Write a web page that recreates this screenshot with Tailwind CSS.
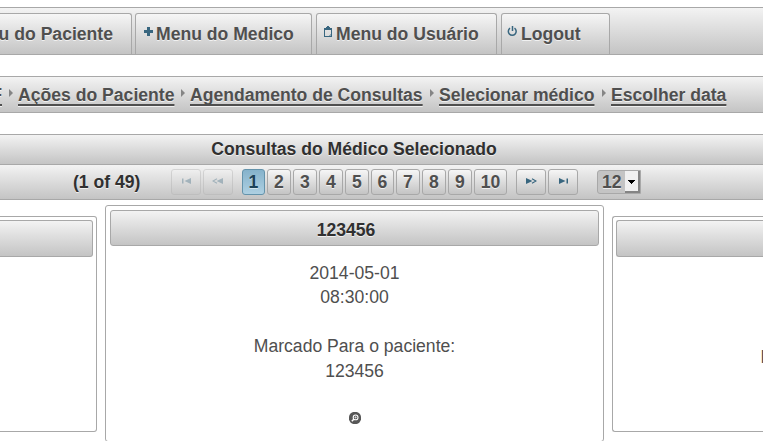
<!DOCTYPE html>
<html lang="pt-BR">
<head>
<meta charset="utf-8">
<title>Consultas</title>
<script src="https://cdn.jsdelivr.net/npm/@tailwindcss/browser@4"></script>
</head>
<body class="w-[763px] bg-white text-[#4f4f4f] text-[17.6px] leading-[24px] [font-family:'Liberation_Sans',Arial,sans-serif]">
<div class="h-[441px] overflow-hidden flex flex-col">

<nav class="mt-[7px] h-[48px] shrink-0 border-y border-[#a8a8a8] bg-linear-to-b from-[#f3f3f3] to-[#c4c4c4] pt-[5px] flex font-bold [text-shadow:0_1px_0_rgba(255,255,255,0.7)] overflow-hidden whitespace-nowrap">
  <div class="w-[132px] shrink-0 h-[41px] border-t border-r border-[#a8a8a8] rounded-tr-[3px] bg-linear-to-b from-[#f6f6f6] to-[#c4c4c4] flex justify-end pr-[18px] pt-[8px] overflow-hidden">Menu do Paciente</div>
  <div class="ml-[3px] w-[177px] shrink-0 h-[41px] border border-b-0 border-[#a8a8a8] rounded-t-[3px] bg-linear-to-b from-[#f6f6f6] to-[#c4c4c4] flex pl-[8px] pt-[8px]">
    <svg class="mt-[5px] mr-[3px] w-[9px] h-[9px] shrink-0" viewBox="0 0 9 9" shape-rendering="crispEdges"><path d="M3 0h3v3h3v3H6v3H3V6H0V3h3z" fill="#38667f"/></svg>
    <span>Menu do Medico</span>
  </div>
  <div class="ml-[4px] w-[181px] shrink-0 h-[41px] border border-b-0 border-[#a8a8a8] rounded-t-[3px] bg-linear-to-b from-[#f6f6f6] to-[#c4c4c4] flex pl-[7px] pt-[8px]">
    <svg class="mt-[4px] mr-[4px] w-[8px] h-[11px] shrink-0" viewBox="0 0 8 11" shape-rendering="crispEdges"><path d="M3 0h2v1h1v1h2v9H0V2h2V1h1zM1 4v6h6V4z" fill="#38667f" fill-rule="evenodd"/><path d="M6 9h1v1H6zM5 9h1v1H5zM6 8h1v1H6z" fill="#8fa8b5"/></svg>
    <span>Menu do Usuário</span>
  </div>
  <div class="ml-[4px] w-[109px] shrink-0 h-[41px] border border-b-0 border-[#a8a8a8] rounded-t-[3px] bg-linear-to-b from-[#f6f6f6] to-[#c4c4c4] flex pl-[5px] pt-[8px]">
    <svg class="mt-[4px] mr-[4px] w-[10px] h-[11px] shrink-0" viewBox="0 0 10 11"><path d="M3 2.200A3.900 3.900 0 1 0 7.500 2.200M5.500 0v5" fill="none" stroke="#38667f" stroke-width="1.500"/></svg>
    <span>Logout</span>
  </div>
</nav>

<div class="mt-[21px] h-[37px] shrink-0 border-y border-[#a8a8a8] bg-linear-to-b from-[#f3f3f3] to-[#c4c4c4] flex font-bold whitespace-nowrap overflow-hidden [text-shadow:0_1px_0_rgba(255,255,255,0.7)]">
  <a class="w-[2px] h-[30px] shrink-0 flex justify-end pt-[6px] overflow-hidden underline underline-offset-[3px] decoration-2">CPF</a>
  <svg class="mt-[12px] ml-[7px] mr-[5px] w-[4px] h-[8px] shrink-0" viewBox="0 0 4 8"><path d="M0 0l4 4-4 4z" fill="#858585"/></svg>
  <a class="w-[156px] pt-[6px] shrink-0 underline underline-offset-[3px] decoration-2 [text-decoration-skip-ink:none]">Ações do Paciente</a>
  <svg class="mt-[12px] ml-[7px] mr-[5px] w-[4px] h-[8px] shrink-0" viewBox="0 0 4 8"><path d="M0 0l4 4-4 4z" fill="#858585"/></svg>
  <a class="w-[233px] pt-[6px] shrink-0 underline underline-offset-[3px] decoration-2 [text-decoration-skip-ink:none]">Agendamento de Consultas</a>
  <svg class="mt-[12px] ml-[7px] mr-[5px] w-[4px] h-[8px] shrink-0" viewBox="0 0 4 8"><path d="M0 0l4 4-4 4z" fill="#858585"/></svg>
  <a class="w-[156px] pt-[6px] shrink-0 underline underline-offset-[3px] decoration-2 [text-decoration-skip-ink:none]">Selecionar médico</a>
  <svg class="mt-[12px] ml-[7px] mr-[5px] w-[4px] h-[8px] shrink-0" viewBox="0 0 4 8"><path d="M0 0l4 4-4 4z" fill="#858585"/></svg>
  <a class="pt-[6px] shrink-0 underline underline-offset-[3px] decoration-2 [text-decoration-skip-ink:none]">Escolher data</a>
</div>

<div class="mt-[21px] h-[30px] shrink-0 border-t border-[#a8a8a8] bg-linear-to-b from-[#f3f3f3] to-[#c4c4c4] font-bold text-[#303030] text-center pt-[2px] pr-[55px] [text-shadow:0_1px_0_rgba(255,255,255,0.7)]">Consultas do Médico Selecionado</div>

<div class="h-[36px] shrink-0 border-y border-[#a8a8a8] bg-linear-to-b from-[#f3f3f3] to-[#c4c4c4] flex items-start pt-[4px] font-bold [text-shadow:0_1px_0_rgba(255,255,255,0.7)]">
  <span class="pl-[73px] pt-[1px] w-[171px] shrink-0 text-[#303030]">(1 of 49)</span>
  <div class="flex gap-[2px] opacity-35">
    <span class="w-[30px] h-[26px] border border-[#a8a8a8] rounded-[3px] bg-linear-to-b from-[#f6f6f6] to-[#c4c4c4] pl-[10px] pt-[8px]"><svg class="w-[9px] h-[6px]" viewBox="0 0 9 6"><path d="M0 .5h1.500v5H0zM9 0v6L2.500 3z" fill="#38667f"/></svg></span>
    <span class="w-[30px] h-[26px] border border-[#a8a8a8] rounded-[3px] bg-linear-to-b from-[#f6f6f6] to-[#c4c4c4] pl-[8px] pt-[8px]"><svg class="w-[11px] h-[6px]" viewBox="0 0 11 6"><path d="M11 0v6L4.500 3z" fill="#38667f"/><path d="M5 .7L1 3l4 2.300" stroke="#38667f" stroke-width="1.200" fill="none"/></svg></span>
  </div>
  <div class="ml-[9px] flex gap-[2px] text-center text-[#4f4f4f]">
    <span class="w-[23px] h-[26px] border border-[#6493ab] rounded-[3px] bg-linear-to-b from-[#85b2cb] to-[#aed0e2] text-[#1c4257] [text-shadow:0_1px_0_rgba(255,255,255,0.5)]">1</span>
    <span class="w-[24px] h-[26px] border border-[#a8a8a8] rounded-[3px] bg-linear-to-b from-[#f6f6f6] to-[#c4c4c4]">2</span>
    <span class="w-[24px] h-[26px] border border-[#a8a8a8] rounded-[3px] bg-linear-to-b from-[#f6f6f6] to-[#c4c4c4]">3</span>
    <span class="w-[24px] h-[26px] border border-[#a8a8a8] rounded-[3px] bg-linear-to-b from-[#f6f6f6] to-[#c4c4c4]">4</span>
    <span class="w-[24px] h-[26px] border border-[#a8a8a8] rounded-[3px] bg-linear-to-b from-[#f6f6f6] to-[#c4c4c4]">5</span>
    <span class="w-[23px] h-[26px] border border-[#a8a8a8] rounded-[3px] bg-linear-to-b from-[#f6f6f6] to-[#c4c4c4]">6</span>
    <span class="w-[24px] h-[26px] border border-[#a8a8a8] rounded-[3px] bg-linear-to-b from-[#f6f6f6] to-[#c4c4c4]">7</span>
    <span class="w-[24px] h-[26px] border border-[#a8a8a8] rounded-[3px] bg-linear-to-b from-[#f6f6f6] to-[#c4c4c4]">8</span>
    <span class="w-[24px] h-[26px] border border-[#a8a8a8] rounded-[3px] bg-linear-to-b from-[#f6f6f6] to-[#c4c4c4]">9</span>
    <span class="w-[33px] h-[26px] border border-[#a8a8a8] rounded-[3px] bg-linear-to-b from-[#f6f6f6] to-[#c4c4c4]">10</span>
  </div>
  <div class="ml-[9px] flex gap-[2px]">
    <span class="w-[30px] h-[26px] border border-[#a8a8a8] rounded-[3px] bg-linear-to-b from-[#f6f6f6] to-[#c4c4c4] pl-[9px] pt-[8px]"><svg class="w-[11px] h-[6px]" viewBox="0 0 11 6"><path d="M0 0v6l6.500-3z" fill="#38667f"/><path d="M6 .7L10 3l-4 2.300" stroke="#38667f" stroke-width="1.200" fill="none"/></svg></span>
    <span class="w-[30px] h-[26px] border border-[#a8a8a8] rounded-[3px] bg-linear-to-b from-[#f6f6f6] to-[#c4c4c4] pl-[10px] pt-[8px]"><svg class="w-[9px] h-[6px]" viewBox="0 0 9 6"><path d="M0 0v6l6.500-3zM7.500 .5H9v5H7.500z" fill="#38667f"/></svg></span>
  </div>
  <div class="ml-[19px] mt-[1px] w-[44px] h-[24px] border border-[#a8a8a8] rounded-l-[3px] bg-[#c4c4c4] flex leading-[22px]">
    <span class="pl-[4px] w-[27px] shrink-0">12</span>
    <span class="w-[15px] h-[22px] bg-[#f0f0f0] border-r-2 border-b-2 border-[#848484] flex justify-center pt-[9px]"><svg class="w-[7px] h-[4px]" viewBox="0 0 7 4" shape-rendering="crispEdges"><path d="M0 0h7v1H6v1H5v1H4v1H3V3H2V2H1V1H0z" fill="#000"/></svg></span>
  </div>
</div>

<main class="mt-[5px] flex items-start">
  <section class="mt-[11px] w-[97px] h-[216px] shrink-0 border border-l-0 border-[#a8a8a8] rounded-r-[3px] pt-[3px] pr-[3px]">
    <div class="h-[37px] border border-l-0 border-[#a8a8a8] rounded-r-[3px] bg-linear-to-b from-[#f3f3f3] to-[#c4c4c4]"></div>
  </section>
  <section class="ml-[8px] w-[499px] h-[237px] shrink-0 border border-[#a8a8a8] rounded-[3px] p-[4px] text-center">
    <h2 class="h-[36px] border border-[#a8a8a8] rounded-[3px] bg-linear-to-b from-[#f3f3f3] to-[#c4c4c4] font-bold text-[#303030] pt-[7px] pr-[17px] [text-shadow:0_1px_0_rgba(255,255,255,0.7)]">123456</h2>
    <div class="pt-[15px] leading-[24px]">
      <p>2014-05-01</p>
      <p>08:30:00</p>
      <p class="mt-[25px]">Marcado Para o paciente:</p>
      <p class="mt-[1px]">123456</p>
      <svg class="mt-[29px] ml-[239px] w-[12px] h-[12px]" viewBox="0 0 12 12"><circle cx="6" cy="6" r="6.200" fill="#575757"/><circle cx="6.600" cy="5.400" r="2.400" fill="none" stroke="#fff" stroke-width="1.100"/><path d="M5 7L2.800 9.200" stroke="#fff" stroke-width="1.500"/><path d="M6.600 4.200v2.400M5.400 5.400h2.400" stroke="#fff" stroke-width=".6"/></svg>
    </div>
  </section>
  <section class="mt-[11px] ml-[8px] w-[151px] h-[216px] shrink-0 border border-r-0 border-[#a8a8a8] rounded-l-[3px] pt-[3px] pl-[3px] overflow-hidden">
    <div class="h-[37px] border border-r-0 border-[#a8a8a8] rounded-l-[3px] bg-linear-to-b from-[#f3f3f3] to-[#c4c4c4]"></div>
    <p class="mt-[88px] ml-[144.500px] whitespace-nowrap">Marcado Para o paciente:</p>
  </section>
</main>
</div>
</body>
</html>
